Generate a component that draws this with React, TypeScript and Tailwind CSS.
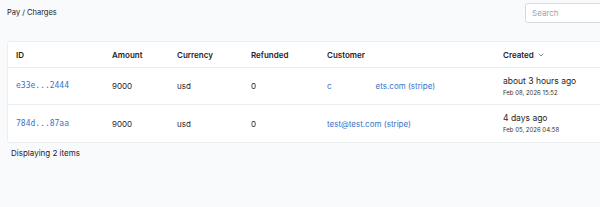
import { ChevronDown } from "lucide-react";

const rows = [
  {
    id: "e33e...2444",
    amount: "9000",
    currency: "usd",
    refunded: "0",
    customer: { head: "c", gap: true, tail: "ets.com (stripe)" },
    ago: "about 3 hours ago",
    date: "Feb 08, 2026 15:52",
  },
  {
    id: "784d...87aa",
    amount: "9000",
    currency: "usd",
    refunded: "0",
    customer: { head: "test@test.com (stripe)", gap: false, tail: "" },
    ago: "4 days ago",
    date: "Feb 05, 2026 04:58",
  },
];

const cols = "grid grid-cols-[96px_65px_74px_76px_176px_1fr] items-center pl-[8px]";

export default function App() {
  return (
    <div className="h-[207px] w-full overflow-hidden bg-[#f9fafb] font-['Inter',sans-serif] text-[#1f2328]">
      <div className="w-[640px]">
        <div className="mt-[3px] flex h-[20px] items-center justify-between pl-[7px]">
          <span className="text-[7.5px]">Pay / Charges</span>
          <input
            placeholder="Search"
            className="mr-[-25px] h-[20px] w-[140px] rounded-[3px] border border-[#d6d9de] bg-white px-[6px] text-[8px] outline-none placeholder:text-[#a0a4aa]"
          />
        </div>

        <div className="ml-[7px] mt-[18px] rounded-[3px] border border-[#eceef1] bg-white">
          <div className={`${cols} h-[26px] border-b border-[#eceef1] text-[8px] font-semibold`}>
            <span>ID</span>
            <span>Amount</span>
            <span>Currency</span>
            <span>Refunded</span>
            <span>Customer</span>
            <span className="flex items-center gap-[3px]">
              Created
              <ChevronDown size={8} strokeWidth={2} className="text-[#555]" />
            </span>
          </div>
          {rows.map((r, i) => (
            <div
              key={r.id}
              className={`${cols} h-[37px] text-[8px] ${i === 0 ? "border-b border-[#eceef1]" : ""}`}
            >
              <span className="font-['DejaVu_Sans_Mono',monospace] text-[8px] text-[#3b73c9]">{r.id}</span>
              <span>{r.amount}</span>
              <span>{r.currency}</span>
              <span>{r.refunded}</span>
              <span className="flex text-[#3b73c9]">
                <span>{r.customer.head}</span>
                {r.customer.gap && <span className="inline-block w-[44px]" aria-hidden />}
                <span>{r.customer.tail}</span>
              </span>
              <span className="flex flex-col gap-[2px]">
                <span className="text-[8.5px] leading-[11px]">{r.ago}</span>
                <span className="text-[6px] leading-[8px] text-[#333]">{r.date}</span>
              </span>
            </div>
          ))}
        </div>

        <div className="mt-[4px] pl-[11px] text-[8px]">Displaying 2 items</div>
      </div>
    </div>
  );
}
